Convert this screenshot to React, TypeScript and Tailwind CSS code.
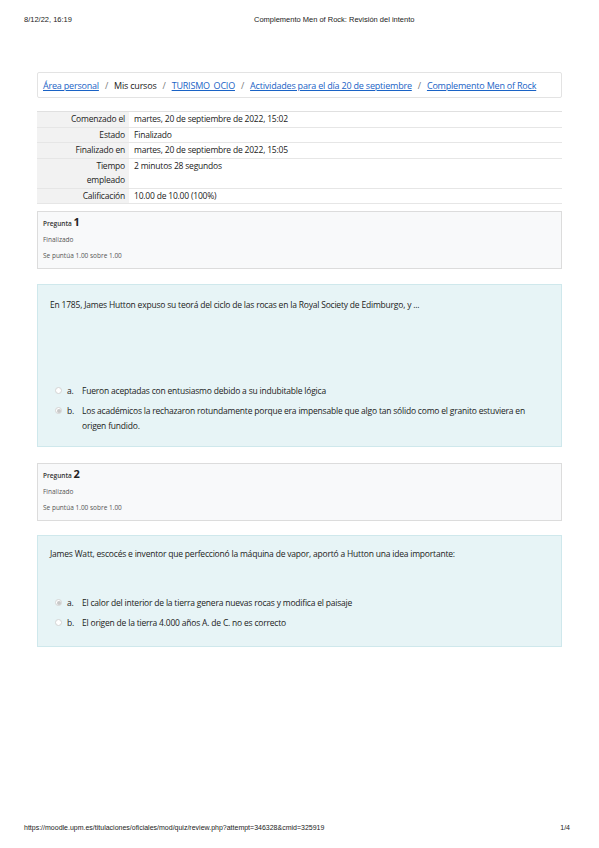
const sans = { fontFamily: '"Open Sans", "Noto Sans", sans-serif' };
const arial = { fontFamily: '"Liberation Sans", Arial, sans-serif' };

function Radio({ checked }: { checked?: boolean }) {
  return (
    <span className="w-[7px] h-[7px] rounded-full border border-[#d4d4d4] bg-white flex items-center justify-center shrink-0 mt-[4px]">
      {checked && <span className="w-[4px] h-[4px] rounded-full bg-[#c8c8c8]" />}
    </span>
  );
}

function Option({ letter, text, checked }: { letter: string; text: string; checked?: boolean }) {
  return (
    <div className="flex items-start">
      <Radio checked={checked} />
      <span className="w-[20px] pl-[5px] shrink-0">{letter}</span>
      <span className="flex-1">{text}</span>
    </div>
  );
}

function Info({ num }: { num: string }) {
  return (
    <div className="bg-[#f8f9fa] border border-[#dcdcdc] px-[5px] pt-[4px] pb-[4px] text-[6.5px] text-[#555] leading-[16px]">
      <div className="text-[#333] font-semibold h-[16px]">
        Pregunta <span className="text-[11px] font-bold text-[#222] leading-none">{num}</span>
      </div>
      <div>Finalizado</div>
      <div>Se puntúa 1.00 sobre 1.00</div>
    </div>
  );
}

export default function App() {
  const rows: [string, string][] = [
    ["Comenzado el", "martes, 20 de septiembre de 2022, 15:02"],
    ["Estado", "Finalizado"],
    ["Finalizado en", "martes, 20 de septiembre de 2022, 15:05"],
    ["Tiempo\nempleado", "2 minutos 28 segundos"],
    ["Calificación", "10.00 de 10.00 (100%)"],
  ];

  return (
    <div className="w-[599px] h-[848px] bg-white flex flex-col relative">
      <div className="flex px-[24px] pt-[14px] text-[7.5px] text-[#222]" style={arial}>
        <span>8/12/22, 16:19</span>
        <span className="ml-[182px]">Complemento Men of Rock: Revisión del intento</span>
      </div>

      <div className="mx-[37px] mt-[47px] flex flex-col text-[#222]" style={sans}>
        <div className="h-[26px] border border-[#e3e3e3] rounded-[2px] flex items-center px-[5px] text-[9px] tracking-[-0.2px]">
          <a className="text-[#1a63c6] underline">Área personal</a>
          <span className="mx-[6px] text-[#777]">/</span>
          <span>Mis cursos</span>
          <span className="mx-[6px] text-[#777]">/</span>
          <a className="text-[#1a63c6] underline">TURISMO_OCIO</a>
          <span className="mx-[6px] text-[#777]">/</span>
          <a className="text-[#1a63c6] underline">Actividades para el día 20 de septiembre</a>
          <span className="mx-[6px] text-[#777]">/</span>
          <a className="text-[#1a63c6] underline">Complemento Men of Rock</a>
        </div>

        <div className="mt-[13px] border-t border-[#e0e0e0] text-[8.5px] leading-[14.5px] tracking-[-0.2px]">
          {rows.map(([label, value]) => (
            <div key={label} className="flex border-b border-[#e6e6e6]">
              <div className="w-[92px] bg-[#f2f2f2] text-right pr-[4px] whitespace-pre-line">{label}</div>
              <div className="flex-1 pl-[5px]">{value}</div>
            </div>
          ))}
        </div>

        <div className="mt-[7px]">
          <Info num="1" />
        </div>

        <div className="mt-[15px] h-[163px] bg-[#e7f4f6] border border-[#cfe8ec] px-[12px] pt-[12px] text-[8.5px] leading-[15px] tracking-[-0.2px] flex flex-col">
          <div>En 1785, James Hutton expuso su teorá del ciclo de las rocas en la Royal Society de Edimburgo, y ...</div>
          <div className="mt-[71px] flex flex-col gap-[5px] pl-[5px]">
            <Option letter="a." text="Fueron aceptadas con entusiasmo debido a su indubitable lógica" />
            <Option letter="b." checked text="Los académicos la rechazaron rotundamente porque era impensable que algo tan sólido como el granito estuviera en origen fundido." />
          </div>
        </div>

        <div className="mt-[16px]">
          <Info num="2" />
        </div>

        <div className="mt-[14px] h-[112px] bg-[#e7f4f6] border border-[#cfe8ec] px-[12px] pt-[10px] text-[8.5px] leading-[15px] tracking-[-0.2px] flex flex-col">
          <div>James Watt, escocés e inventor que perfeccionó la máquina de vapor, aportó a Hutton una idea importante:</div>
          <div className="mt-[34px] flex flex-col gap-[5px] pl-[5px]">
            <Option letter="a." checked text="El calor del interior de la tierra genera nuevas rocas y modifica el paisaje" />
            <Option letter="b." text="El origen de la tierra 4.000 años A. de C. no es correcto" />
          </div>
        </div>
      </div>

      <div className="mt-auto mb-[15px] flex justify-between px-[24px] pr-[29px] text-[7px] text-[#222]" style={arial}>
        <span>https://moodle.upm.es/titulaciones/oficiales/mod/quiz/review.php?attempt=346328&amp;cmid=325919</span>
        <span>1/4</span>
      </div>
    </div>
  );
}
